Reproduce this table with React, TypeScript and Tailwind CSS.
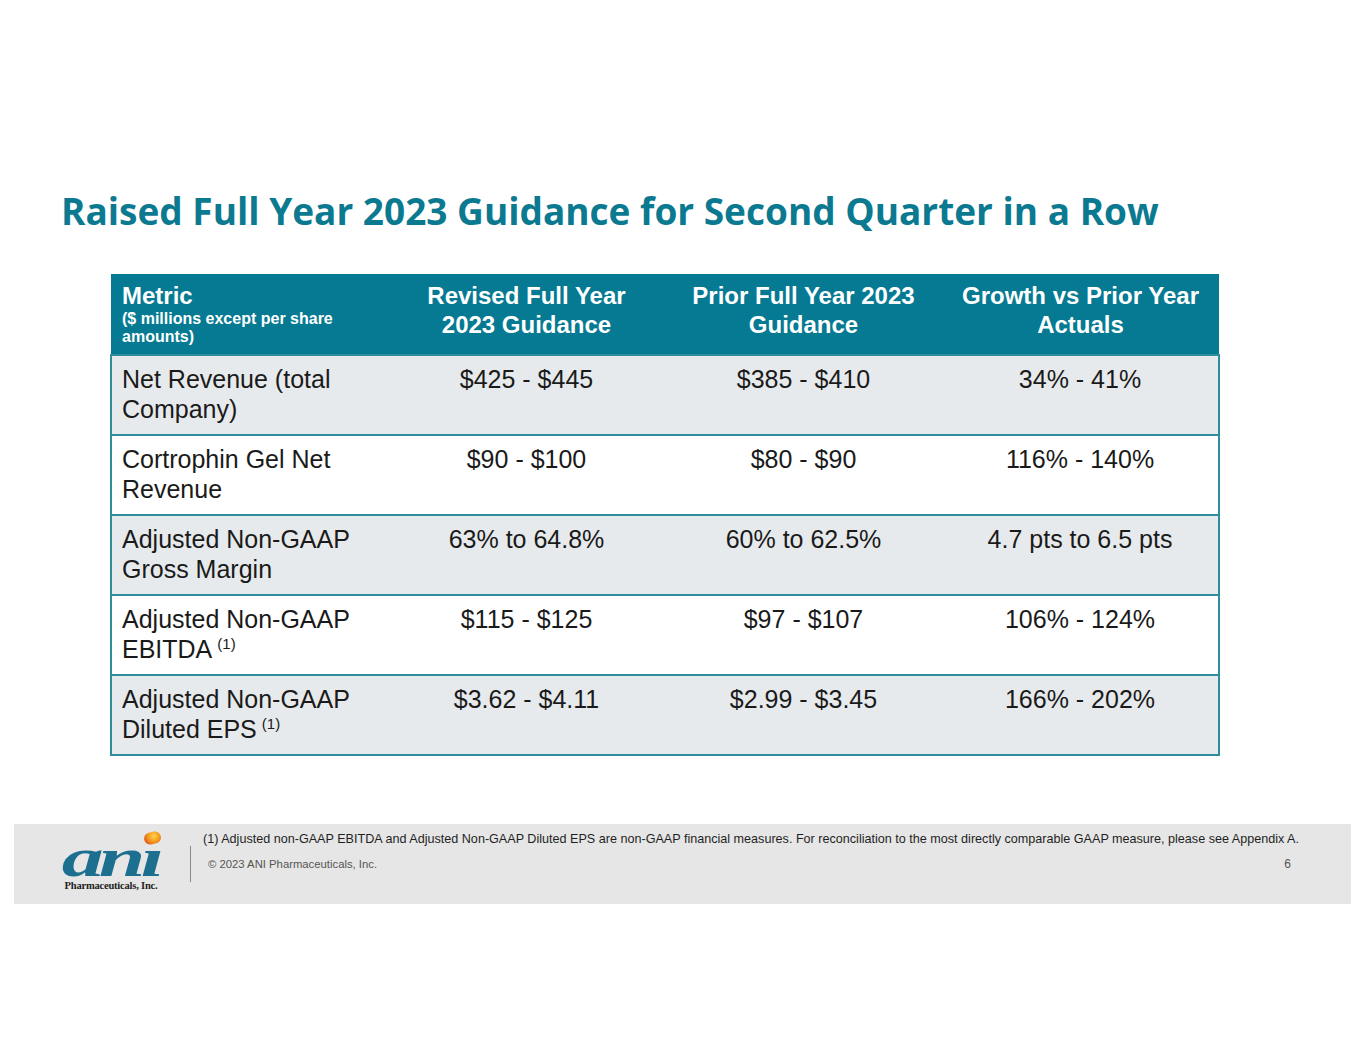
import React from "react"

const rows = [
  { metric: "Net Revenue (total Company)", note: false, revised: "$425 - $445", prior: "$385 - $410", growth: "34% - 41%" },
  { metric: "Cortrophin Gel Net Revenue", note: false, revised: "$90 - $100", prior: "$80 - $90", growth: "116% - 140%" },
  { metric: "Adjusted Non-GAAP Gross Margin", note: false, revised: "63% to 64.8%", prior: "60% to 62.5%", growth: "4.7 pts to 6.5 pts" },
  { metric: "Adjusted Non-GAAP EBITDA", note: true, revised: "$115 - $125", prior: "$97 - $107", growth: "106% - 124%" },
  { metric: "Adjusted Non-GAAP Diluted EPS", note: true, revised: "$3.62 - $4.11", prior: "$2.99 - $3.45", growth: "166% - 202%" },
]

export default function App() {
  return (
    <div className="w-[1365px] h-[1055px] bg-white flex flex-col font-['Liberation_Sans',Arial,sans-serif]">
      <h1 className="mt-[186px] ml-[61px] text-[37px] leading-[50px] font-bold text-[#0b7a91] font-['Open_Sans',sans-serif]">
        Raised Full Year 2023 Guidance for Second Quarter in a Row
      </h1>
      <table className="mt-[38px] ml-[110px] w-[1108px] border-collapse table-fixed">
        <thead>
          <tr className="bg-[#057a92] text-white h-[81px]">
            <th className="w-[277px] align-top text-left pl-[11px] pt-[7px] font-bold">
              <div className="text-[24px] leading-[29px]">Metric</div>
              <div className="text-[16px] leading-[18px] pr-[10px]">($ millions except per share amounts)</div>
            </th>
            <th className="w-[277px] align-top pt-[7px] px-[14px] text-[24px] leading-[29px] font-bold">Revised Full Year 2023 Guidance</th>
            <th className="w-[277px] align-top pt-[7px] px-[14px] text-[24px] leading-[29px] font-bold">Prior Full Year 2023 Guidance</th>
            <th className="w-[277px] align-top pt-[7px] px-[8px] text-[24px] leading-[29px] font-bold">Growth vs Prior Year Actuals</th>
          </tr>
        </thead>
        <tbody>
          {rows.map((r, i) => (
            <tr key={i} className={`h-[80px] text-[25px] leading-[30px] text-[#1a1a1a] border-2 border-[#2f8d9c] ${i % 2 === 0 ? "bg-[#e7eaec]" : "bg-white"}`}>
              <td className="align-top pl-[10px] pr-[20px] pt-[8px]">
                {r.metric}
                {r.note && <span className="relative top-[-9px] text-[15px] leading-none ml-[5px]">(1)</span>}
              </td>
              <td className="align-top text-center pt-[8px]">{r.revised}</td>
              <td className="align-top text-center pt-[8px]">{r.prior}</td>
              <td className="align-top text-center pt-[8px]">{r.growth}</td>
            </tr>
          ))}
        </tbody>
      </table>
      <div className="mt-[68px] ml-[14px] w-[1337px] h-[80px] bg-[#e6e6e6] flex items-center">
        <div className="w-[177px] flex justify-center pl-[18px] pt-[6px]">
          <AniLogo />
        </div>
        <div className="w-px h-[36px] bg-[#8a8a8a]" />
        <div className="flex-1 self-stretch pt-[8px] pl-[12px] pr-[52px]">
          <div className="text-[12.6px] leading-[15px] text-[#1f1f1f] whitespace-nowrap">
            (1) Adjusted non-GAAP EBITDA and Adjusted Non-GAAP Diluted EPS are non-GAAP financial measures. For reconciliation to the most directly comparable GAAP measure, please see Appendix A.
          </div>
          <div className="mt-[10px] pl-[5px] flex justify-between text-[11.3px] leading-[14px] text-[#555]">
            <span>© 2023 ANI Pharmaceuticals, Inc.</span>
            <span className="text-[12px] pr-[8px]">6</span>
          </div>
        </div>
      </div>
    </div>
  )
}

function AniLogo() {
  return (
    <div className="flex flex-col items-center relative">
      <div className="relative h-[28px] leading-[28px]">
        <span className="inline-block text-[54px] font-bold italic text-[#1d6f8f] font-['Liberation_Serif',serif] tracking-[-3px] scale-x-[1.55] origin-center">
          anı
        </span>
        <span className="absolute right-[-18px] top-[-12px] w-[17px] h-[12px] rounded-full bg-[radial-gradient(circle_at_60%_35%,#ffd34a,#f39a1e_45%,#d8351b)] -rotate-12" />
      </div>
      <div className="text-[10.5px] leading-[11px] font-bold text-[#222] font-['Liberation_Serif',serif] mt-[8px] tracking-[-0.2px]">
        Pharmaceuticals, Inc.
      </div>
    </div>
  )
}
